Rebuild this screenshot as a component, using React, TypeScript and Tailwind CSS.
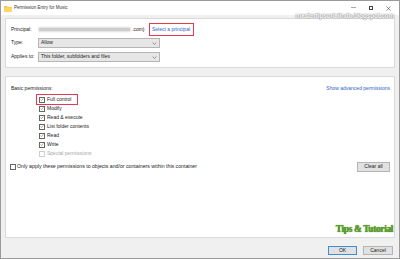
const font = "font-['Liberation_Sans','Arial',sans-serif]"

const Check = ({ checked = true, disabled = false }: { checked?: boolean; disabled?: boolean }) => (
  <span
    className={`flex h-[6px] w-[6px] shrink-0 items-center justify-center border bg-white ${
      disabled ? "border-[#cfcfcf]" : "border-[#666]"
    }`}
  >
    {checked && (
      <svg viewBox="0 0 6 6" className="h-[5px] w-[5px]">
        <path d="M0.9 3.1 L2.3 4.5 L5.1 1.3" fill="none" stroke="#444" strokeWidth="0.7" />
      </svg>
    )}
  </span>
)

const Dropdown = ({ value }: { value: string }) => (
  <div className="flex h-[10px] w-[122px] items-center justify-between border border-[#b5b5b5] bg-[#e6e6e6] pl-[2px] pr-[2px]">
    <span className="text-[5px] text-[#222]">{value}</span>
    <svg viewBox="0 0 6 4" className="h-[3px] w-[5px]">
      <path d="M0.5 0.8 L3 3.2 L5.5 0.8" fill="none" stroke="#555" strokeWidth="0.8" />
    </svg>
  </div>
)

const perms = [
  "Full control",
  "Modify",
  "Read & execute",
  "List folder contents",
  "Read",
  "Write",
]

export default function App() {
  return (
    <div
      className={`${font} flex h-[259px] w-[400px] flex-col overflow-hidden border border-[#9a9a9a] bg-[#f0f0f0] text-[#222]`}
    >
      {/* title bar */}
      <div className="relative flex h-[14px] shrink-0 items-center bg-white pl-[3px]">
        <svg viewBox="0 0 8 7" className="h-[7px] w-[8px]">
          <path d="M0 1 H3 L4 2 H8 V7 H0 Z" fill="#f3c64c" />
          <path d="M0 2.6 H8 V7 H0 Z" fill="#fbd766" />
        </svg>
        <span className="ml-[2px] text-[4.5px] text-[#333]">Permission Entry for Music</span>
        <div className="ml-auto flex items-center gap-[13px] pr-[8px]">
          <span className="block h-[0.6px] w-[5px] translate-y-[-1px] bg-[#aaa]" />
          <span className="block h-[4px] w-[4px] border border-[#444]" />
          <svg viewBox="0 0 6 6" className="h-[5px] w-[5px]">
            <path d="M0.5 0.5 L5.5 5.5 M5.5 0.5 L0.5 5.5" stroke="#444" strokeWidth="0.7" />
          </svg>
        </div>
        <span className="absolute right-[5px] top-[10px] text-[6.3px] font-bold tracking-[-0.1px] text-white [text-shadow:0_0_1px_#777,0_0_1px_#777]">
          mastertipsorialindo.blogspot.com
        </span>
      </div>

      <div className="flex flex-1 flex-col px-[4px] pt-[3px]">
        {/* top panel */}
        <div className="flex h-[50px] shrink-0 flex-col border border-[#dadada] bg-white pl-[5px] pt-[4px]">
          <div className="flex h-[13px] items-center">
            <span className="w-[27px] text-[5px]">Principal:</span>
            <span className="mx-[1px] h-[3px] w-[91px] rounded-[1px] bg-[#cdcdcd] shadow-[0_0_2px_1px_#dcdcdc]" />
            <span className="ml-[1px] text-[5px]">.com)</span>
            <span className="ml-[4px] flex h-[13px] w-[45px] items-center justify-center bg-[#e8384f] p-[1px]">
              <span className="flex h-full w-full items-center justify-center bg-white text-[5px] text-[#2e63c9]">
                Select a principal
              </span>
            </span>
          </div>
          <div className="mt-[2px] flex h-[10px] items-center">
            <span className="w-[27px] text-[5px]">Type:</span>
            <Dropdown value="Allow" />
          </div>
          <div className="mt-[4px] flex h-[10px] items-center">
            <span className="w-[27px] text-[5px]">Applies to:</span>
            <Dropdown value="This folder, subfolders and files" />
          </div>
        </div>

        {/* permissions panel */}
        <div className="mt-[8px] flex h-[162px] shrink-0 flex-col border border-[#dadada] bg-white pt-[8px]">
          <div className="flex h-[8px] items-center justify-between pl-[5px] pr-[4px]">
            <span className="text-[5px]">Basic permissions:</span>
            <span className="text-[5px] text-[#2e63c9]">Show advanced permissions</span>
          </div>
          <div className="mt-[2px] flex flex-col pl-[33px]">
            {perms.map((p, i) => (
              <div key={p} className="relative flex h-[9px] items-center gap-[2px]">
                <Check />
                <span className="text-[5px]">{p}</span>
                {i === 0 && (
                  <span className="absolute left-[-3px] top-[-1px] h-[11px] w-[42px] border border-[#e8384f]" />
                )}
              </div>
            ))}
            <div className="flex h-[9px] items-center gap-[2px]">
              <Check checked={false} disabled />
              <span className="text-[5px] text-[#a8a8a8]">Special permissions</span>
            </div>
          </div>
          <div className="mt-[4px] flex h-[10px] items-center justify-between pl-[4px] pr-[4px]">
            <div className="flex items-center gap-[1px]">
              <Check checked={false} />
              <span className="text-[5.2px]">
                Only apply these permissions to objects and/or containers within this container
              </span>
            </div>
            <span className="flex h-[10px] w-[33px] items-center justify-center border border-[#b5b5b5] bg-[#e1e1e1] text-[5px]">
              Clear all
            </span>
          </div>
          <div className="mt-auto mb-[1px] self-end pr-[1px] font-['Liberation_Serif',serif] text-[9.5px] font-bold tracking-[-0.4px] text-[#5aa51c] [text-shadow:0_0_1px_#1d4a08]">
            Tips &amp; Tutorial
          </div>
        </div>

        {/* footer */}
        <div className="flex flex-1 items-start justify-end gap-[6px] pr-[2px] pt-[8px]">
          <span className="flex h-[9px] w-[29px] items-center justify-center border border-[#3c8ce0] bg-[#e1e1e1] text-[5px]">
            OK
          </span>
          <span className="flex h-[9px] w-[30px] items-center justify-center border border-[#b5b5b5] bg-[#e1e1e1] text-[5px]">
            Cancel
          </span>
        </div>
      </div>
    </div>
  )
}
